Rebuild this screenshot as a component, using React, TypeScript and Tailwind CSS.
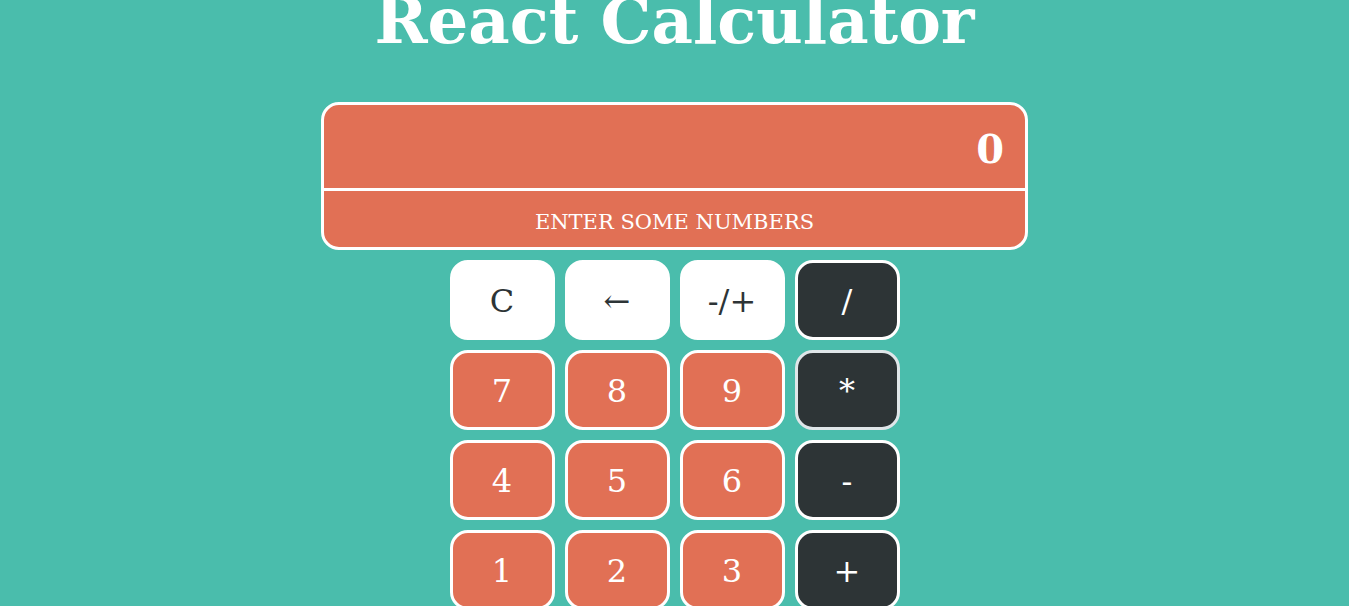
const rows: { label: string; kind: 'light' | 'num' | 'op' }[][] = [
  [
    { label: 'C', kind: 'light' },
    { label: '←', kind: 'light' },
    { label: '-/+', kind: 'light' },
    { label: '/', kind: 'op' },
  ],
  [
    { label: '7', kind: 'num' },
    { label: '8', kind: 'num' },
    { label: '9', kind: 'num' },
    { label: '*', kind: 'op' },
  ],
  [
    { label: '4', kind: 'num' },
    { label: '5', kind: 'num' },
    { label: '6', kind: 'num' },
    { label: '-', kind: 'op' },
  ],
  [
    { label: '1', kind: 'num' },
    { label: '2', kind: 'num' },
    { label: '3', kind: 'num' },
    { label: '+', kind: 'op' },
  ],
];

function Key({ label, kind }: { label: string; kind: 'light' | 'num' | 'op' }) {
  const styles = {
    light: 'bg-white text-[#2d3436] border-white',
    num: 'bg-[#e17055] text-white border-white',
    op:
      label === '*'
        ? 'bg-[#2d3436] text-white border-[#dfe6e9]'
        : 'bg-[#2d3436] text-white border-white',
  }[kind];
  return (
    <button
      type="button"
      className={`h-[80px] w-[105px] rounded-[18px] border-[3px] pt-[1px] text-[32px] leading-none ${styles}`}
    >
      {label}
    </button>
  );
}

export default function App() {
  return (
    <div
      className="min-h-screen bg-[#4abdac] flex flex-col items-center"
      style={{ fontFamily: '"DejaVu Serif", serif' }}
    >
      <h1 className="mt-[-27px] mb-[33px] text-[64px] font-bold text-white">React Calculator</h1>

      <div className="w-[707px] rounded-[18px] border-[3px] border-white bg-[#e17055] text-white overflow-hidden">
        <div className="h-[83px] flex items-center justify-end pr-[21px] pt-[4px] text-[40px] font-bold">0</div>
        <div className="h-[59px] border-t-[3px] border-white flex items-center justify-center pt-[7px] text-[21px]">
          ENTER SOME NUMBERS
        </div>
      </div>

      <div className="mt-[10px] grid grid-cols-4 gap-[10px]">
        {rows.flat().map((k) => (
          <Key key={k.label} label={k.label} kind={k.kind} />
        ))}
      </div>
    </div>
  );
}
